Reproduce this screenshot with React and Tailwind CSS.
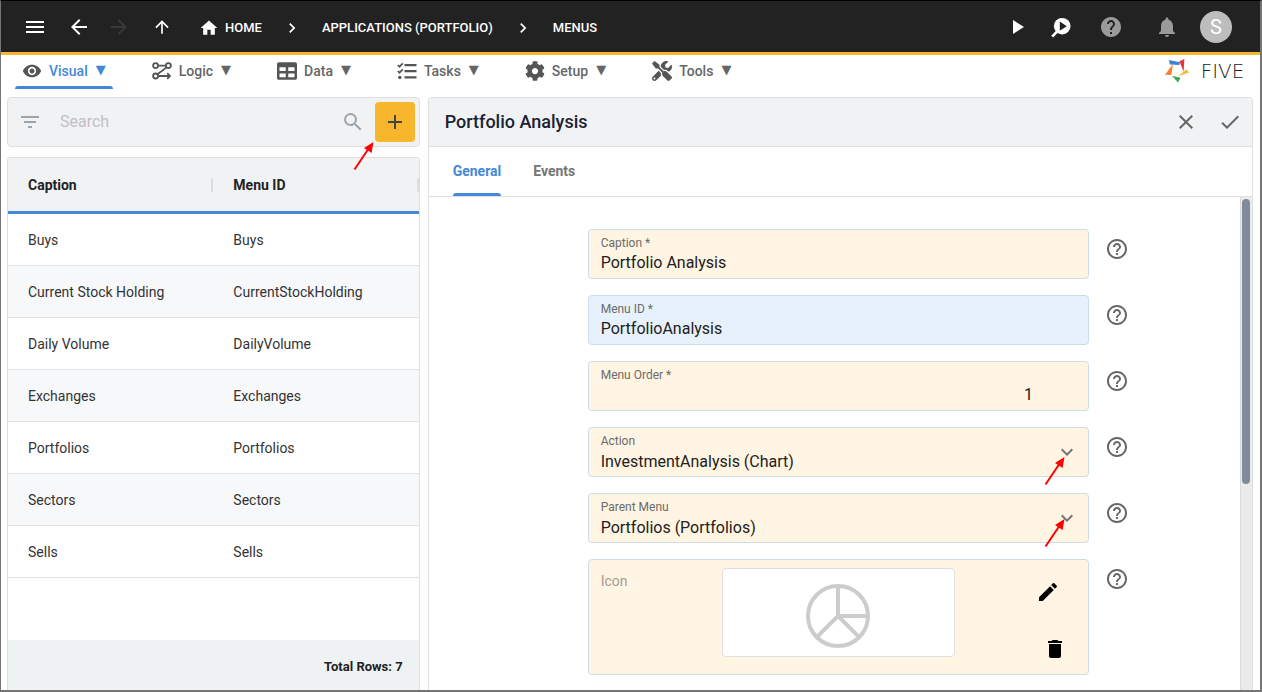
import React from "react";
import {
  MdAdd,
  MdArrowBack,
  MdArrowForward,
  MdArrowUpward,
  MdCheck,
  MdChevronRight,
  MdClose,
  MdDelete,
  MdEdit,
  MdExpandMore,
  MdFilterList,
  MdHelp,
  MdHelpOutline,
  MdHome,
  MdMenu,
  MdNotifications,
  MdPlayArrow,
  MdSearch,
  MdVisibility,
} from "react-icons/md";
import { FaCog, FaTable, FaTools } from "react-icons/fa";

const LogicIcon = ({ className }) => (
  <svg viewBox="0 0 20 20" className={className} fill="none" stroke="currentColor" strokeWidth="1.8">
    <circle cx="3.6" cy="4.6" r="2.5" />
    <circle cx="16.4" cy="4.6" r="2.5" />
    <circle cx="3.6" cy="15" r="2.5" />
    <path d="M6 4.6h8M14.6 6.4L5.4 13.2M6.4 15H18M15.2 12.2L18 15l-2.8 2.8" />
  </svg>
);

const TasksIcon = ({ className }) => (
  <svg viewBox="0 0 20 20" className={className} fill="none" stroke="currentColor">
    <path d="M7.5 4.2H19.5M7.5 10.2H19.5M7.5 16.4H19.5" strokeWidth="2.2" />
    <path d="M.8 4l1.7 1.7L5.8 2.4M.8 10l1.7 1.7 3.3-3.3" strokeWidth="1.7" />
    <circle cx="2.8" cy="16.4" r="1.7" fill="currentColor" stroke="none" />
  </svg>
);

const InspectIcon = ({ className }) => (
  <svg viewBox="0 0 24 24" className={className}>
    <path d="M9 15.5L3.2 21.6" stroke="currentColor" strokeWidth="2.6" />
    <circle cx="13.2" cy="11.2" r="8.3" fill="currentColor" />
    <path d="M10.8 6.6v9.2l7-4.6z" fill="#222222" />
  </svg>
);

const FiveLogo = () => (
  <a href="#home" aria-label="Five" className="flex items-center gap-1 text-[#222222]">
    <svg viewBox="0 0 24 24" className="h-6 w-6">
      <path d="M4 1l11 2.2-.6 2.8-9.6-.5z" fill="#3f83d6" />
      <path d="M19.4 0l-.8 12.8L14.4 2.2z" fill="#e8333b" />
      <path d="M24 13.4L12.6 17.2l9-6.8z" fill="#f8b62c" />
      <path d="M7 16.8l8.6 2L13 23.6z" fill="#3aa757" />
      <path d="M0 15.8L7.8 5.2 6.4 16z" fill="#f77f2e" />
    </svg>
    <span className="w-[59px] text-center font-['DejaVu_Sans',sans-serif] text-xl font-extralight leading-6">
      FIVE
    </span>
  </a>
);

const PieIcon = () => (
  <svg viewBox="0 0 64 64" className="h-16 w-16" fill="none" stroke="#cccccc" strokeWidth="4">
    <circle cx="32" cy="32" r="30" />
    <path d="M32 2v30h30M32 32l21.2 21.2M32 32L10.8 53.2" />
  </svg>
);

const RedArrow = ({ className }) => (
  <svg viewBox="0 0 22 30" className={`pointer-events-none absolute h-[30px] w-[22px] ${className}`}>
    <path d="M1.5 28.5L15 8.5" stroke="#ff0000" strokeWidth="2" />
    <path d="M20.5 1L18.6 12 11 7z" fill="#ff0000" />
  </svg>
);

const menuTabs = [
  { label: "Visual", icon: MdVisibility, active: true },
  { label: "Logic", icon: LogicIcon },
  { label: "Data", icon: FaTable },
  { label: "Tasks", icon: TasksIcon },
  { label: "Setup", icon: FaCog },
  { label: "Tools", icon: FaTools },
];

const menus = [
  { caption: "Buys", id: "Buys" },
  { caption: "Current Stock Holding", id: "CurrentStockHolding" },
  { caption: "Daily Volume", id: "DailyVolume" },
  { caption: "Exchanges", id: "Exchanges" },
  { caption: "Portfolios", id: "Portfolios" },
  { caption: "Sectors", id: "Sectors" },
  { caption: "Sells", id: "Sells" },
];

const TopBar = () => (
  <header className="flex h-[54px] shrink-0 items-center border-b-[3px] border-[#f8b62c] bg-[#222222] pl-3 pr-7 text-white">
    <button aria-label="Menu" className="flex w-11 justify-center">
      <MdMenu className="h-6 w-6" />
    </button>
    <button aria-label="Back" className="flex w-11 justify-center">
      <MdArrowBack className="h-6 w-6" />
    </button>
    <button aria-label="Forward" disabled className="flex w-9 justify-center text-[#383838]">
      <MdArrowForward className="h-6 w-6" />
    </button>
    <button aria-label="Up" className="flex w-[50px] justify-center">
      <MdArrowUpward className="h-5 w-5" />
    </button>
    <nav className="ml-3 flex items-center gap-5 pt-0.5 text-[13px] font-medium">
      <a href="#home" className="flex items-center gap-1.5">
        <MdHome className="h-5 w-5" />
        HOME
      </a>
      <MdChevronRight className="h-5 w-5" />
      <a href="#portfolio">APPLICATIONS (PORTFOLIO)</a>
      <MdChevronRight className="h-5 w-5" />
      <a href="#menus">MENUS</a>
    </nav>
    <div className="ml-auto flex items-center">
      <button aria-label="Run" className="mr-5">
        <MdPlayArrow className="h-6 w-6" />
      </button>
      <button aria-label="Inspect" className="mr-[26px]">
        <InspectIcon className="h-6 w-6" />
      </button>
      <button aria-label="Help" className="mr-8 text-[#9a9a9a]">
        <MdHelp className="h-6 w-6" />
      </button>
      <button aria-label="Notifications" className="mr-[21px] text-[#9a9a9a]">
        <MdNotifications className="h-6 w-6" />
      </button>
      <button className="h-8 w-8 rounded-full bg-[#bdbdbd] text-xl leading-8">S</button>
    </div>
  </header>
);

const MenuBar = () => (
  <div className="flex h-[42px] shrink-0 items-start justify-between pl-3.5 pr-2">
    <nav className="flex gap-8">
      {menuTabs.map(({ label, icon: Icon, active }) => (
        <button
          key={label}
          className={`flex h-[34px] flex-col ${active ? "text-[#4488d8]" : "text-[#666666]"}`}
        >
          <span className="flex flex-1 items-center gap-[7px] px-[7px] text-sm font-medium">
            <Icon className="h-5 w-5 text-[#555555]" />
            <span className="flex items-center gap-2">
              {label}
              <span className="font-['DejaVu_Sans',sans-serif] text-[13px]">▼</span>
            </span>
          </span>
          <span className={`h-[3px] w-full rounded-t-sm ${active ? "bg-[#4488d8]" : ""}`} />
        </button>
      ))}
    </nav>
    <div className="pt-1">
      <FiveLogo />
    </div>
  </div>
);

const MenuList = () => (
  <section className="flex min-h-0 min-w-0 flex-col gap-2.5">
    <div className="relative flex h-[50px] shrink-0 items-center rounded border border-[#dfdfdf] bg-[#f1f2f4] pl-2.5 pr-1 text-[#9aa5ad]">
      <button aria-label="Filter">
        <MdFilterList className="h-6 w-6" />
      </button>
      <input
        type="text"
        aria-label="Search"
        placeholder="Search"
        className="ml-[18px] min-w-0 flex-1 bg-transparent text-base outline-none placeholder:text-[#bfc1c4]"
      />
      <MdSearch className="mr-2.5 h-6 w-6" />
      <button
        aria-label="Add menu"
        className="flex h-10 w-10 items-center justify-center rounded bg-[#f8b62c] text-[#444444]"
      >
        <MdAdd className="h-6 w-6" />
      </button>
      <RedArrow className="right-11 top-[43px]" />
    </div>
    <div className="flex min-h-0 flex-1 flex-col overflow-hidden rounded-t border border-b-0 border-[#dfdfdf]">
      <div className="min-h-0 flex-1 overflow-hidden">
        <table className="w-full table-fixed border-separate border-spacing-0 text-left text-sm text-[#333333]">
          <thead>
            <tr className="bg-[#f1f2f4] text-[#222222]">
              {["Caption", "Menu ID"].map((heading) => (
                <th
                  key={heading}
                  scope="col"
                  className="h-14 border-b-[3px] border-[#4488d8] p-0 font-bold"
                >
                  <div className="flex items-center justify-between pl-5">
                    {heading}
                    <span className="h-3.5 w-0.5 bg-[#dcdddf]" />
                  </div>
                </th>
              ))}
            </tr>
          </thead>
          <tbody>
            {menus.map((menu) => (
              <tr key={menu.id} className="even:bg-[#f7f8fa]">
                <td className="h-[52px] border-b border-[#e2e2e2] px-5 py-0">{menu.caption}</td>
                <td className="h-[52px] border-b border-[#e2e2e2] px-5 py-0">{menu.id}</td>
              </tr>
            ))}
          </tbody>
        </table>
      </div>
      <div className="flex h-[50px] shrink-0 items-center justify-end bg-[#eef2f3] px-4 pt-1 text-[13px] font-bold text-[#222222]">
        Total Rows: 7
      </div>
    </div>
  </section>
);

const FieldRow = ({ label, children }) => (
  <div className="flex items-start gap-4">
    {children}
    <button aria-label={`Help for ${label}`} className="mt-2 text-[#666666]">
      <MdHelpOutline className="h-6 w-6" />
    </button>
  </div>
);

const TextField = ({ id, label, value, blue, numeric }) => (
  <FieldRow label={label}>
    <div
      className={`flex h-[50px] min-w-0 flex-1 flex-col rounded border border-[#cddceb] px-3 pt-[5px] ${
        blue ? "bg-[#e7f1fc]" : "bg-[#fff5e2]"
      }`}
    >
      <label htmlFor={id} className="text-xs leading-4 text-[#6b6b6b]">
        {label} *
      </label>
      <input
        id={id}
        type="text"
        defaultValue={value}
        className={`w-full bg-transparent text-base leading-6 text-[#212121] outline-none ${
          numeric ? "pr-[43px] text-right" : ""
        }`}
      />
    </div>
  </FieldRow>
);

const SelectField = ({ id, label, value, arrowClass }) => (
  <FieldRow label={label}>
    <div className="relative flex h-[50px] min-w-0 flex-1 flex-col rounded border border-[#cddceb] bg-[#fff5e2] px-3 pt-[5px]">
      <label htmlFor={id} className="text-xs leading-4 text-[#6b6b6b]">
        {label}
      </label>
      <select
        id={id}
        defaultValue={value}
        className="w-full appearance-none bg-transparent text-base leading-[26px] text-[#212121] outline-none"
      >
        <option>{value}</option>
      </select>
      <MdExpandMore className="pointer-events-none absolute right-[9px] top-3 h-6 w-6 text-[#757575]" />
      <RedArrow className={arrowClass} />
    </div>
  </FieldRow>
);

const IconField = () => (
  <FieldRow label="Icon">
    <div className="flex h-29 min-w-0 flex-1 items-start rounded border border-[#cddceb] bg-[#fff5e2] pl-3 pr-[21px]">
      <span className="w-[121px] shrink-0 pt-[11px] text-sm leading-5 text-[#a09d97]">Icon</span>
      <div className="mt-2 flex h-[89px] w-[233px] justify-center rounded-sm border border-[#dfdfdf] bg-white pt-[15px]">
        <PieIcon />
      </div>
      <div className="ml-auto flex h-full flex-col items-end justify-between pb-[13px] pt-5 text-black">
        <button aria-label="Edit icon" className="flex w-[38px] justify-center">
          <MdEdit className="h-6 w-6" />
        </button>
        <button aria-label="Delete icon">
          <MdDelete className="h-6 w-6" />
        </button>
      </div>
    </div>
  </FieldRow>
);

const MenuForm = () => (
  <section className="flex min-h-0 min-w-0 flex-col overflow-hidden rounded-t border border-b-0 border-[#dfdfdf]">
    <div className="flex h-[49px] shrink-0 items-center border-b border-[#dfdfdf] bg-[#f1f2f4] pl-4 pr-2.5">
      <h1 className="text-lg font-medium text-[#1a2233]">Portfolio Analysis</h1>
      <div className="ml-auto flex gap-5 text-[#666666]">
        <button aria-label="Close">
          <MdClose className="h-6 w-6" />
        </button>
        <button aria-label="Save">
          <MdCheck className="h-6 w-6" />
        </button>
      </div>
    </div>
    <div role="tablist" className="flex h-[50px] shrink-0 gap-8 border-b border-[#dfdfdf] px-6 text-sm font-bold">
      <button role="tab" aria-selected="true" className="flex flex-col text-[#4488d8]">
        <span className="flex flex-1 items-center pt-0.5">General</span>
        <span className="h-[3px] w-full rounded-t-sm bg-[#4488d8]" />
      </button>
      <button role="tab" aria-selected="false" className="flex flex-col pb-[3px] text-[#757575]">
        <span className="flex flex-1 items-center pt-0.5">Events</span>
      </button>
    </div>
    <div className="flex min-h-0 flex-1">
      <form className="flex min-w-0 flex-1 flex-col gap-4 overflow-hidden pl-[159px] pr-[111px] pt-8">
        <TextField id="caption" label="Caption" value="Portfolio Analysis" />
        <TextField id="menu-id" label="Menu ID" value="PortfolioAnalysis" blue />
        <TextField id="menu-order" label="Menu Order" value="1" numeric />
        <SelectField
          id="action"
          label="Action"
          value="InvestmentAnalysis (Chart)"
          arrowClass="right-[22px] top-7"
        />
        <SelectField
          id="parent-menu"
          label="Parent Menu"
          value="Portfolios (Portfolios)"
          arrowClass="right-[22px] top-6"
        />
        <IconField />
      </form>
      <div className="w-3 shrink-0 border-l border-[#dadada] bg-[#ebebeb] pl-px pr-0.5 pt-0.5">
        <div className="h-[58%] rounded-full bg-[#828b9b]" />
      </div>
    </div>
  </section>
);

const App = () => {
  return (
    <div className="flex h-screen flex-col overflow-hidden border-2 border-l border-t border-[#757575] border-t-black bg-white font-[Roboto,sans-serif]">
      <TopBar />
      <MenuBar />
      <main className="grid min-h-0 flex-1 grid-cols-[1fr_2fr] grid-rows-[minmax(0,1fr)] gap-2 pl-1.5 pr-[7px]">
        <MenuList />
        <MenuForm />
      </main>
    </div>
  );
};

export default App;
